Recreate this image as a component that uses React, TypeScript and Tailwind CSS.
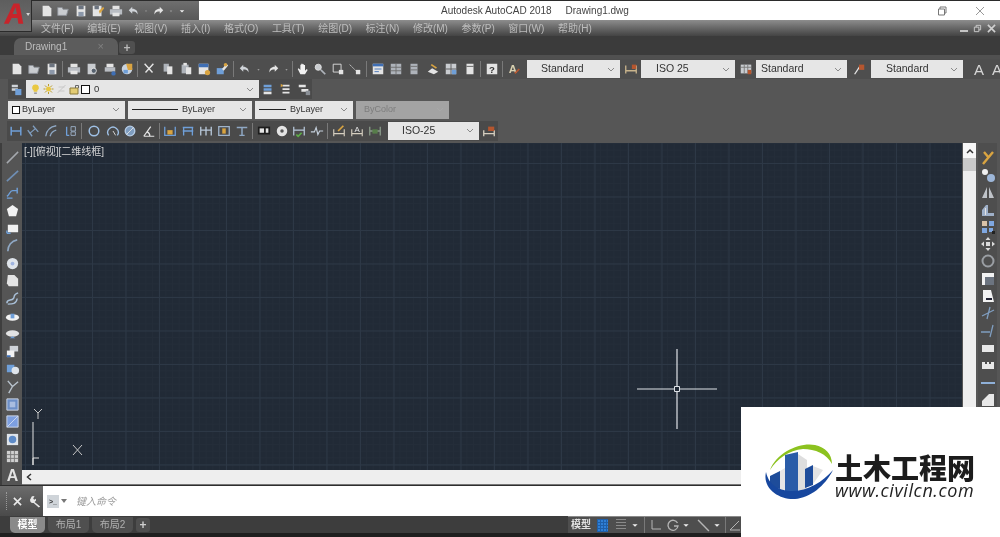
import type { ReactNode } from "react";

const cjk = "font-['Liberation_Sans','Noto_Sans_CJK_SC',sans-serif]";

const W = "#e4e4e4";
const B = "#6f9fd8";
const DB = "#3f6fb5";
const O = "#d9a441";
const R = "#b5562f";

const icons: Record<string, ReactNode> = {
  page: <path d="M3 2h7l3 3v9H3z" fill={W} />,
  open: <path d="M2 4h5l1 2h6l-2 7H2z" fill="#c9ccd0" stroke="#8a8f96" />,
  save: <g><path d="M3 2h10v12H3z" fill={W} /><path d="M5 2h6v4H5z" fill="#6c7480" /><path d="M5 9h6v5H5z" fill="#8c98aa" /></g>,
  saveas: <g><path d="M2 2h10v12H2z" fill={W} /><path d="M4 2h5v4H4z" fill="#6c7480" /><path d="M9 8l5-5 1 2-5 6z" fill={O} /></g>,
  print: <g><path d="M4 2h8v4H4z" fill={W} /><path d="M1 6h14v6H1z" fill="#b9bdc3" /><path d="M4 10h8v4H4z" fill={W} /></g>,
  preview: <g><path d="M3 2h9v12H3z" fill="#c9ccd0" /><circle cx="10" cy="10" r="3" fill="#56616e" stroke={W} /></g>,
  plot: <g><path d="M4 2h8v4H4z" fill={W} /><path d="M2 6h12v5H2z" fill="#b9bdc3" /><circle cx="12" cy="13" r="2.5" fill={DB} /></g>,
  publish: <g><circle cx="8" cy="8" r="6" fill="#c9d3de" /><path d="M7 2h7v7H9z" fill={O} /><path d="M4 9h5v4H4z" fill={B} /></g>,
  cut: <path d="M3 2l9 10M13 2L4 12" stroke={W} strokeWidth="1.6" fill="none" />,
  copy: <g><path d="M3 2h6v9H3z" fill="#aeb3ba" /><path d="M7 5h6v9H7z" fill={W} /></g>,
  paste: <g><path d="M3 3h8v10H3z" fill="#aeb3ba" /><path d="M5 1h4v3H5z" fill={W} /><path d="M8 6h6v8H8z" fill={W} /></g>,
  block: <g><path d="M2 2h11v12H2z" fill={W} /><path d="M2 2h11v4H2z" fill={DB} /><circle cx="12" cy="12" r="3" fill={O} /></g>,
  brush: <g><path d="M2 7h8v7H2z" fill={B} /><path d="M8 8l5-6 2 2-5 6z" fill={W} /><circle cx="12" cy="3" r="2" fill={O} /></g>,
  undo: <path d="M6 3L2 7l4 4V8.5c3 0 5 .5 6 3.5 .5-4-2-6.5-6-6.5z" fill="#cfd3d8" />,
  redo: <path d="M10 3l4 4-4 4V8.5c-3 0-5 .5-6 3.5-.5-4 2-6.5 6-6.5z" fill={W} />,
  caret: <path d="M6 7h4l-2 3z" fill="#9a9a9a" />,
  caretW: <path d="M5 7h6l-3 3z" fill="#f0f0f0" />,
  hand: <path d="M5 14L2 8l1-1 2 2V3h1v4V2h1.5v5V2.5H9V7V3.5h1.3V10l2-2 1 1-3 5z" fill="#f2f2f2" />,
  zoom: <g><circle cx="6" cy="6" r="3.5" fill="#c9ccd0" stroke={W} /><path d="M9 9l5 5" stroke="#aeb3ba" strokeWidth="2" /></g>,
  window: <g><path d="M2.5 2.5h9v9h-9z" fill="none" stroke={W} /><path d="M9 9h5v5H9z" fill={W} /></g>,
  prev: <g><path d="M2 3l7 7" stroke={W} strokeDasharray="2 1" /><path d="M9 9h5v5H9z" fill={W} /></g>,
  props: <g><path d="M2 2h12v12H2z" fill={W} /><path d="M2 2h12v3H2z" fill={DB} /><path d="M4 8h8M4 11h5" stroke={DB} /></g>,
  list: <g><path d="M2 2h12v12H2z" fill="#aeb3ba" /><path d="M8 2v12M2 6h12M2 10h12" stroke="#6b6b6b" /></g>,
  tall: <g><path d="M4 2h8v12H4z" fill="#aeb3ba" /><path d="M4 5h8M4 9h8" stroke="#6b6b6b" /></g>,
  sheet: <g><path d="M2 11l5-4 7 4-5 3z" fill={W} /><path d="M6 3l6 4" stroke={O} strokeWidth="2" /></g>,
  calc: <g><path d="M2 2h12v12H2z" fill="#c9ccd0" /><path d="M8 2v12M2 8h12" stroke="#555" /><path d="M9 9h5v5H9z" fill={B} /></g>,
  door: <g><path d="M4 2h8v12H4z" fill={W} /><path d="M4 5h8" stroke="#555" /></g>,
  help: <g><path d="M2 2h12v12H2z" fill={W} /><text x="8" y="12.5" fontSize="11" fontWeight="700" textAnchor="middle" fill="#333" fontFamily="Liberation Sans">?</text></g>,
  textA: <g><text x="2" y="12" fontSize="13" fontWeight="700" fill="#d8d0b0" fontFamily="Liberation Sans">A</text><path d="M9 13l5-5" stroke={R} strokeWidth="2" /></g>,
  dimStyle: <g><path d="M2 4v9M14 4v9M2 10h12" stroke="#c9b48c" strokeWidth="1.5" /><path d="M9 3h5v5H9z" fill={R} /></g>,
  tableStyle: <g><path d="M2 3h12v10H2z" fill="#c9ccd0" /><path d="M2 6h12M6 3v10M10 3v10" stroke="#777" /><path d="M10 9h4v5h-4z" fill={R} /></g>,
  leader: <g><path d="M3 14L9 5" stroke={W} strokeWidth="1.5" /><path d="M8 3h6v6H8z" fill={R} /></g>,
  bigA: <text x="8" y="14" fontSize="15" textAnchor="middle" fontWeight="700" fill="#e2e2e2" fontFamily="Liberation Sans">A</text>,
  layer: <g><path d="M2 3h7v3H2zM2 7h7v3H2z" fill="#cfd3d8" /><path d="M6 8h7v7H6z" fill={B} /></g>,
  layerA: <g><path d="M3 3h9v3H3zM3 7h9v3H3z" fill={B} /><path d="M3 11h9v3H3z" fill={W} /></g>,
  layerB: <g><path d="M4 3h8v2H4zM4 7h8v2H4zM4 11h8v2H4z" fill={W} /><path d="M2 2l3 2-3 2z" fill={O} /></g>,
  layerC: <g><path d="M2 3h8v3H2zM5 8h8v3H5z" fill={W} /><path d="M10 10h5v5h-5z" fill="#8a8f96" /></g>,
  dimLinear: <path d="M2.5 3v10M13.5 3v10M3 8h10" stroke={B} strokeWidth="1.7" fill="none" />,
  dimAligned: <path d="M2 7l5 7M8 2l6 7M4 11l7-6" stroke="#7f9dbf" strokeWidth="1.5" fill="none" />,
  dimArc: <path d="M2 14C3 7 7 3 14 2M7 14C8 10 10 8 14 7" stroke="#8fa8c4" strokeWidth="1.5" fill="none" />,
  dimOrd: <g><path d="M3 3v10M3 13h3" stroke={B} strokeWidth="1.5" /><path d="M8 3h5v5H8zM8 9h5v4H8z" fill="none" stroke="#9fb4cb" /></g>,
  circle: <circle cx="8" cy="8" r="5.5" fill="none" stroke="#9fc1e6" strokeWidth="1.7" />,
  jog: <g><path d="M3 13A6 6 0 1 1 13 13" fill="none" stroke="#9fc1e6" strokeWidth="1.5" /><path d="M8 8l3 5" stroke={W} /></g>,
  dia: <g><circle cx="8" cy="8" r="5.5" fill="#7f9dbf" stroke="#b7cde6" strokeWidth="1.5" /><path d="M4 12l8-8" stroke={W} /></g>,
  angle: <path d="M2 14h12M2 14L10 3M9 14c0-2-1-4-3-5" stroke={W} strokeWidth="1.4" fill="none" />,
  quick: <g><path d="M2 3v10h12V3" stroke={B} strokeWidth="1.5" fill="none" /><path d="M5 7h6v5H5z" fill={O} /></g>,
  base: <path d="M2 4h12M2 8h12M3 4v9M13 4v9" stroke={B} strokeWidth="1.5" fill="none" />,
  cont: <path d="M2 3v10M8 3v10M14 3v10M2 7h12" stroke="#b8c8da" strokeWidth="1.5" fill="none" />,
  space: <g><path d="M2 3h12v10H2z" fill="none" stroke="#9fb4cb" strokeWidth="1.5" /><path d="M6 5h4v6H6z" fill={O} /></g>,
  brk: <path d="M2 4h12M8 4v9M5 13h6" stroke="#8fa8c4" strokeWidth="1.7" fill="none" />,
  tol: <g><path d="M1 3h14v9H1z" fill="#1d1d1d" /><path d="M3 5h5v5H3z" fill={W} /><path d="M10 5h3v5h-3z" fill={W} /></g>,
  target: <g><circle cx="8" cy="8" r="6" fill={W} /><circle cx="8" cy="8" r="2" fill="#555" /></g>,
  inspect: <g><path d="M2 3v10M14 3v10M2 7h12" stroke="#b8c8da" strokeWidth="1.4" fill="none" /><path d="M5 12l2 2 4-4" stroke="#5dad47" strokeWidth="2" fill="none" /></g>,
  jogline: <path d="M1 9h4l2-5 2 8 2-4h4" stroke="#c4cfdb" strokeWidth="1.3" fill="none" />,
  edit: <g><path d="M2 6v8M14 6v8M2 11h12" stroke="#d6cfc0" strokeWidth="1.3" /><path d="M7 8l6-6" stroke={O} strokeWidth="2" /></g>,
  editA: <g><path d="M2 6v8M14 6v8M2 11h12" stroke="#d6cfc0" strokeWidth="1.3" /><text x="8" y="9" fontSize="9" textAnchor="middle" fill={W} fontFamily="Liberation Sans">A</text></g>,
  update: <g><path d="M2 3v10M14 3v10M2 8h12" stroke="#8a9a8a" strokeWidth="1.5" /><path d="M5 6h6v5H5z" fill="#577d4a" /></g>,
  dimNow: <g><path d="M2 7v7M14 7v7M2 11h12" stroke="#d6cfc0" strokeWidth="1.5" /><path d="M7 3h7v5H7z" fill={R} /></g>,
  line: <path d="M2 14L14 2" stroke="#a5a9ae" strokeWidth="1.6" />,
  xline: <path d="M2 14L14 3" stroke="#6f8fb5" strokeWidth="1.8" />,
  poly: <path d="M2 12c3-1 3-6 6-6h5M13 3v6M2 14h6" stroke={B} strokeWidth="1.5" fill="none" />,
  pent: <path d="M8 2l6 4.5-2.2 7.5H4.2L2 6.5z" fill="#f2f2f2" />,
  rect: <g><path d="M3 4h11v8H3z" fill="#f2f2f2" /><path d="M2 13v-3M2 13h4" stroke={B} strokeWidth="1.5" /></g>,
  arc: <path d="M3 14C3 8 7 3 13 2" stroke="#8fa8c4" strokeWidth="1.8" fill="none" />,
  disc: <g><circle cx="8" cy="8" r="6" fill="#dfe4ea" /><circle cx="8" cy="8" r="2" fill="#9fb4e0" /></g>,
  cloud: <path d="M3 2h7l4 4v8H4l-2-3z" fill="#e3e3e3" />,
  spline: <path d="M2 13c0-5 5-2 7-5s-1-4 5-6M3 14c5 0 9 0 10-6" stroke="#a9c0d8" strokeWidth="1.5" fill="none" />,
  ell: <g><ellipse cx="8" cy="9" rx="7" ry="3.5" fill="#f2f2f2" /><path d="M6 5h4v5H6z" fill={B} /></g>,
  ellArc: <g><ellipse cx="8" cy="8" rx="7" ry="3.5" fill="#e3e3e3" /><path d="M5 13l3-2 3 2z" fill={B} /></g>,
  insert: <g><path d="M5 2h9v6H5z" fill="#cfd3d8" /><path d="M2 7h8v7H2z" fill="#f2f2f2" /><path d="M2 12h4v2H2z" fill={DB} /></g>,
  make: <g><path d="M2 4h8v8H2z" fill={B} /><circle cx="11" cy="10" r="4" fill="#dfe4ea" /></g>,
  point: <path d="M3 2l5 6 6-5M8 8l-4 7" stroke="#b9c3cd" strokeWidth="1.5" fill="none" />,
  hatch: <g><path d="M2 2h12v12H2z" fill="#6d8fc7" stroke="#cfd8e6" /><path d="M5 5h6v6H5z" fill="#a9bde0" /></g>,
  gradient: <g><path d="M2 2h12v12H2z" fill="#7d9fe0" stroke="#cfd8e6" /><path d="M2 14L14 2" stroke="#cdd9f0" /></g>,
  region: <g><path d="M2 2h12v12H2z" fill="#dfe4ea" /><circle cx="8" cy="8" r="4" fill="#5e8bc7" /></g>,
  table: <g><path d="M2 2h12v12H2z" fill="#d0d0d0" /><path d="M2 6h12M2 10h12M6 2v12M10 2v12" stroke="#777" /></g>,
  erase: <path d="M3 14L13 2M4 2l5 6" stroke={O} strokeWidth="2.4" />,
  copyObj: <g><circle cx="5" cy="5" r="3" fill="#f0f0f0" /><circle cx="11" cy="11" r="4" fill="#9db6d8" /></g>,
  mirror: <path d="M7 3v11H2zM9 3v11h5z" fill="#bfc3c8" />,
  offset: <g><path d="M2 14V8l4-5 2 0v8h6v3z" fill="#9fb0c8" /><path d="M5 13V6h1v7z" fill={W} /></g>,
  array: <g><path d="M2 2h5v5H2z" fill="#d9c2a8" /><path d="M9 2h5v5H9zM2 9h5v5H2z" fill="#7fa7e0" /><path d="M9 9h4v4H9z" fill="#7fa7e0" /><path d="M12 12h3v3h-3z" fill="#222" /></g>,
  move: <path d="M8 1l2.5 3h-5zM8 15l2.5-3h-5zM1 8l3-2.5v5zM15 8l-3-2.5v5zM6 6h4v4H6z" fill="#dadada" />,
  rotate: <circle cx="8" cy="8" r="5.5" fill="none" stroke="#9a9ea3" strokeWidth="2" />,
  scale: <g><path d="M2 2h12v12H2z" fill="#f2f2f2" /><path d="M5 6h9v8H5z" fill="#6c7480" /></g>,
  stretch: <g><path d="M3 2h8l3 12H3z" fill="#f2f2f2" /><path d="M6 11h6" stroke="#223" strokeWidth="2" /></g>,
  trim: <path d="M2 11l12-6M10 2L7 14" stroke="#7f9dbf" strokeWidth="1.3" />,
  extend: <path d="M1 9h9M13 2l-3 12" stroke="#7f9dbf" strokeWidth="1.3" />,
  brkPt: <path d="M2 5h12v7H2z" fill="#e8e8e8" />,
  brkGap: <path d="M2 5h3v2h2V5h2v2h2V5h3v7H2z" fill="#e8e8e8" />,
  join: <path d="M1 8h14" stroke="#8fb0d8" strokeWidth="2" />,
  chamfer: <path d="M2 14V9l7-7h5v12z" fill="#e8e8e8" />,
};

const Icon = ({ name, size = 16 }: { name: string; size?: number }) => (
  <svg viewBox="0 0 16 16" width={size} height={size} className="shrink-0">
    {icons[name]}
  </svg>
);

const Tool = ({ name, w = 18 }: { name: string; w?: number }) => (
  <div className="flex h-full shrink-0 items-center justify-center" style={{ width: w }}>
    <Icon name={name} size={Math.min(w, 14)} />
  </div>
);

const Sep = () => <div className="mx-[1px] h-[16px] w-px shrink-0 bg-[#797979]" />;

const Chevron = ({ muted }: { muted?: boolean }) => (
  <svg viewBox="0 0 8 5" width="8" height="5" className="shrink-0">
    <path d="M1 1l3 3 3-3" fill="none" stroke={muted ? "#a8a8a8" : "#8a8a8a"} strokeWidth="1" />
  </svg>
);

const Combo = ({
  width,
  children,
  className = "bg-[#e6e6e6] text-[#333]",
  muted,
}: {
  width: number;
  children: ReactNode;
  className?: string;
  muted?: boolean;
}) => (
  <div
    className={`flex h-[18px] shrink-0 items-center justify-between pl-1 pr-[5px] text-[10px] ${className}`}
    style={{ width }}
  >
    <div className="flex min-w-0 flex-1 items-center">{children}</div>
    <Chevron muted={muted} />
  </div>
);

const menus = ["文件(F)", "编辑(E)", "视图(V)", "插入(I)", "格式(O)", "工具(T)", "绘图(D)", "标注(N)", "修改(M)", "参数(P)", "窗口(W)", "帮助(H)"];
const leftTools = ["line", "xline", "poly", "pent", "rect", "arc", "disc", "cloud", "spline", "ell", "ellArc", "insert", "make", "point", "hatch", "gradient", "region", "table", "bigA"];
const rightTools = ["erase", "copyObj", "mirror", "offset", "array", "move", "rotate", "scale", "stretch", "trim", "extend", "brkPt", "brkGap", "join", "chamfer", "chamfer"];

const LineSample = ({ w }: { w: number }) => <div className="mr-1 h-px shrink-0 bg-[#222]" style={{ width: w }} />;

const App = () => {
  return (
    <div className={`relative flex h-[537px] w-[1000px] flex-col overflow-hidden bg-[#565656] blur-[0.6px] ${cjk}`}>
      {/* title bar */}
      <div className="flex h-[20px] shrink-0 border-t border-[#2b2b2b]">
        <div className="flex w-[199px] shrink-0 items-center bg-gradient-to-b from-[#6f6f6f] to-[#585858] pl-[39px]">
          <Tool name="page" w={15} />
          <Tool name="open" w={18} />
          <Tool name="save" w={17} />
          <Tool name="saveas" w={17} />
          <Tool name="print" w={20} />
          <Tool name="undo" w={16} />
          <Tool name="caret" w={8} />
          <Tool name="redo" w={16} />
          <Tool name="caret" w={10} />
          <Tool name="caretW" w={12} />
        </div>
        <div className="relative flex flex-1 items-center bg-white">
          <span className="ml-[242px] whitespace-pre text-[10px] text-[#444]">Autodesk AutoCAD 2018     Drawing1.dwg</span>
          <svg viewBox="0 0 10 10" width="10" height="10" className="absolute left-[738px] top-[5px]">
            <path d="M1.5 3h6v6h-6zM3 3V1h6v6H7.5" fill="none" stroke="#777" />
          </svg>
          <svg viewBox="0 0 10 10" width="10" height="10" className="absolute left-[776px] top-[5px]">
            <path d="M1 1l8 8M9 1l-8 8" stroke="#999" />
          </svg>
        </div>
      </div>

      {/* menu bar */}
      <div className="flex h-[16px] shrink-0 items-center bg-gradient-to-b from-[#8d8d8d] to-[#444] pl-[41px] text-[10px] leading-none text-[#bdbdbd]">
        <div className="flex flex-1 gap-[13.5px] pt-px">
          {menus.map((m) => (
            <span key={m} className="whitespace-nowrap">
              {m}
            </span>
          ))}
        </div>
        <div className="flex items-center gap-[5px] pr-[4px] text-[#c9c9c9]">
          <div className="mt-[5px] h-[2px] w-[8px] bg-[#c4c4c4]" />
          <svg viewBox="0 0 10 10" width="9" height="9">
            <path d="M1.5 3.5h5v5h-5zM3.5 3.5v-2h5v5h-2" fill="none" stroke="#d0d0d0" />
          </svg>
          <svg viewBox="0 0 10 10" width="9" height="9">
            <path d="M1 1l8 8M9 1l-8 8" stroke="#d0d0d0" strokeWidth="1.8" />
          </svg>
        </div>
      </div>

      {/* file tabs */}
      <div className="flex h-[19px] shrink-0 items-end bg-[#3b3b3b] pl-[14px]">
        <div className="flex h-[17px] w-[104px] items-center justify-between rounded-t-[7px] bg-[#5c5c5c] px-[11px] text-[10px] text-[#bdbdbd]">
          <span>Drawing1</span>
          <span className="mr-[3px] text-[11px] leading-none text-[#808080]">×</span>
        </div>
        <div className="mb-[1px] ml-[1px] flex h-[13px] w-[16px] items-center justify-center rounded-[3px] bg-[#505050] text-[12px] font-bold leading-none text-[#b8b8b8]">
          +
        </div>
      </div>

      <div className="h-[4px] shrink-0 bg-[#505050]" />

      {/* standard toolbar */}
      <div className="flex h-[20px] shrink-0 items-center bg-[#4e4e4e] pl-[8px]">
        <Tool name="page" />
        <Tool name="open" w={16} />
        <Tool name="save" w={19} />
        <Sep />
        <Tool name="print" w={19} />
        <Tool name="preview" />
        <Tool name="plot" w={17} />
        <Tool name="publish" w={18} />
        <Sep />
        <Tool name="cut" w={20} />
        <Tool name="copy" />
        <Tool name="paste" />
        <Tool name="block" w={17} />
        <Tool name="brush" w={20} />
        <Sep />
        <Tool name="undo" w={19} />
        <Tool name="caret" w={9} />
        <Tool name="redo" w={19} />
        <Tool name="caret" w={9} />
        <Sep />
        <Tool name="hand" w={17} />
        <Tool name="zoom" />
        <Tool name="window" w={17} />
        <Tool name="prev" w={17} />
        <div className="w-[2px] shrink-0" />
        <Sep />
        <Tool name="props" w={19} />
        <Tool name="list" />
        <Tool name="tall" w={18} />
        <Tool name="sheet" w={19} />
        <Tool name="calc" w={18} />
        <Tool name="door" w={19} />
        <Sep />
        <Tool name="help" w={19} />
        <Sep />
        <Tool name="textA" w={20} />
        <div className="w-[3px] shrink-0" />
        <Combo width={93}>
          <span className="ml-[10px] text-[10.5px]">Standard</span>
        </Combo>
        <Tool name="dimStyle" w={21} />
        <Combo width={94}>
          <span className="ml-[11px] text-[10.5px]">ISO 25</span>
        </Combo>
        <Tool name="tableStyle" w={21} />
        <Combo width={91}>
          <span className="ml-[1px] text-[10.5px]">Standard</span>
        </Combo>
        <Tool name="leader" w={24} />
        <Combo width={92}>
          <span className="ml-[11px] text-[10.5px]">Standard</span>
        </Combo>
        <div className="ml-[11px] flex gap-[8px] text-[15px] leading-none text-[#d6d6d6]">
          <span>A</span>
          <span>A</span>
        </div>
      </div>

      {/* layer toolbar */}
      <div className="flex h-[20px] shrink-0 items-center pl-[8px]">
        <div className="flex h-[20px] w-[304px] items-center bg-[#4a4a4a]">
          <Tool name="layer" w={18} />
          <Combo width={233}>
            <svg viewBox="0 0 12 12" width="11" height="12" className="shrink-0">
              <path d="M6 1a3.5 3.5 0 0 1 2 6.5V9H4V7.5A3.5 3.5 0 0 1 6 1z" fill="#e9c842" />
              <path d="M4.5 10.5h3" stroke="#666" />
            </svg>
            <svg viewBox="0 0 12 12" width="13" height="12" className="ml-[1px] shrink-0">
              <circle cx="6" cy="6" r="2.5" fill="#e9c842" />
              <path d="M6 1v2M6 9v2M1 6h2M9 6h2M2.5 2.5l1.5 1.5M8 8l1.5 1.5M2.5 9.5L4 8M8 4l1.5-1.5" stroke="#b89b2c" />
            </svg>
            <svg viewBox="0 0 12 12" width="13" height="12" className="shrink-0">
              <path d="M2 10l8-8M3 4h6M3 8h6" stroke="#c8c8c8" />
            </svg>
            <svg viewBox="0 0 12 12" width="13" height="12" className="shrink-0">
              <path d="M1.5 5h8v6h-8z" fill="#e3cc74" stroke="#8a7a3a" />
              <path d="M7 5V2.5h3V5" fill="none" stroke="#666" />
            </svg>
            <div className="h-[9px] w-[9px] shrink-0 border border-[#111] bg-white" />
            <span className="ml-[4px] text-[9.5px]">0</span>
          </Combo>
          <Tool name="layerA" w={18} />
          <Tool name="layerB" w={18} />
          <Tool name="layerC" w={17} />
        </div>
      </div>

      {/* properties toolbar */}
      <div className="flex h-[21px] shrink-0 items-center gap-[3px] pl-[8px]">
        <Combo width={117}>
          <div className="mr-[2px] h-[8px] w-[8px] border border-[#111] bg-white" />
          <span className="text-[9px]">ByLayer</span>
        </Combo>
        <Combo width={124}>
          <LineSample w={46} />
          <span className="text-[9px]">ByLayer</span>
        </Combo>
        <Combo width={98}>
          <LineSample w={27} />
          <span className="text-[9px]">ByLayer</span>
        </Combo>
        <Combo width={93} className="bg-[#a3a3a3] text-[#7d7d7d]" muted>
          <span className="ml-[4px] text-[9px]">ByColor</span>
        </Combo>
      </div>

      {/* dimension toolbar */}
      <div className="flex h-[21px] shrink-0 items-center pl-[7px]">
        <div className="flex h-[20px] w-[491px] items-center bg-[#4a4a4a]">
          <Tool name="dimLinear" w={18} />
          <Tool name="dimAligned" w={16} />
          <Tool name="dimArc" w={20} />
          <Tool name="dimOrd" w={19} />
          <Sep />
          <Tool name="circle" w={21} />
          <Tool name="jog" w={17} />
          <Tool name="dia" w={18} />
          <Tool name="angle" w={19} />
          <Sep />
          <Tool name="quick" w={18} />
          <Tool name="base" w={17} />
          <Tool name="cont" w={19} />
          <Tool name="space" w={18} />
          <Tool name="brk" w={18} />
          <Sep />
          <Tool name="tol" w={19} />
          <Tool name="target" w={17} />
          <Tool name="inspect" w={18} />
          <Tool name="jogline" w={18} />
          <Sep />
          <Tool name="edit" w={19} />
          <Tool name="editA" w={18} />
          <Tool name="update" w={17} />
          <Combo width={91} className="ml-[5px] bg-[#e6e6e6] text-[#333]">
            <span className="ml-[10px] text-[10.5px]">ISO-25</span>
          </Combo>
          <Tool name="dimNow" w={20} />
        </div>
      </div>

      <div className="h-[1px] shrink-0 bg-[#565656]" />

      {/* workspace */}
      <div className="flex h-[343px] shrink-0 pt-px">
        <div className="flex w-[22px] shrink-0 flex-col items-center border-l-2 border-[#3e3e3e] bg-[#555] pt-[6px]">
          {leftTools.map((t, i) => (
            <div key={i} className="flex h-[17.6px] shrink-0 items-center justify-center">
              <Icon name={t} size={t === "bigA" ? 17 : 15} />
            </div>
          ))}
        </div>

        <div className="flex min-w-0 flex-1 flex-col">
          <div className="relative h-[327px] shrink-0 overflow-hidden bg-[#212a36] bg-[linear-gradient(#2d3846_1px,transparent_1px),linear-gradient(90deg,#2d3846_1px,transparent_1px),linear-gradient(#242d39_1px,transparent_1px),linear-gradient(90deg,#242d39_1px,transparent_1px)] bg-[size:33.5px_33.5px,33.5px_33.5px,6.7px_6.7px,6.7px_6.7px] bg-[position:0_20px,3px_0,0_20px,3px_0]">
            <span className="absolute left-[2px] top-[2px] whitespace-nowrap text-[10px] leading-[14px] text-[#d6d6d6]">
              [-][俯视][二维线框]
            </span>

            {/* UCS icon */}
            <svg viewBox="0 0 70 60" width="70" height="60" className="absolute left-[3px] top-[263px]">
              <path d="M8 16v43M8 52h6M8 59V52" stroke="#e2e2e2" fill="none" />
              <path d="M9 3l4 4 4-4M13 7v6" stroke="#c7c7c7" fill="none" />
              <path d="M48 39l9 10M57 39l-9 10" stroke="#c7c7c7" fill="none" />
            </svg>

            {/* crosshair */}
            <svg viewBox="0 0 80 80" width="80" height="80" className="absolute left-[615px] top-[206px]">
              <path d="M40 0v37M40 43v37M0 40h37M43 40h37" stroke="#dfe3e8" strokeWidth="1.2" />
              <path d="M37.5 37.5h5v5h-5z" fill="none" stroke="#dfe3e8" />
            </svg>
          </div>
          <div className="flex h-[15px] shrink-0 items-center border-b border-[#777] bg-[#eeeeee] pl-[4px]">
            <svg viewBox="0 0 6 8" width="6" height="8">
              <path d="M5 1L1.5 4 5 7" fill="none" stroke="#333" strokeWidth="1.5" />
            </svg>
          </div>
        </div>

        <div className="flex w-[38px] shrink-0 items-start justify-between">
          <div className="ml-px flex h-[327px] w-[13px] flex-col bg-[#eeeeee]">
            <div className="flex h-[15px] items-center justify-center bg-[#f7f7f7]">
              <svg viewBox="0 0 8 6" width="8" height="6">
                <path d="M1 5l3-3 3 3" fill="none" stroke="#333" strokeWidth="1.5" />
              </svg>
            </div>
            <div className="h-[13px] bg-[#c9c9c9]" />
          </div>
          <div className="mr-[3px] flex w-[19px] flex-col items-center bg-[#4e4e4e] pt-[6px]">
            {rightTools.map((t, i) => (
              <div key={i} className="flex h-[17.3px] shrink-0 items-center justify-center">
                <Icon name={t} size={16} />
              </div>
            ))}
          </div>
        </div>
      </div>

      {/* command line */}
      <div className="flex h-[31px] shrink-0 border-t border-[#2e2e2e]">
        <div className="flex w-[43px] shrink-0 items-center bg-gradient-to-b from-[#6c6c6c] to-[#4a4a4a] pl-[6px]">
          <div className="h-[18px] border-l border-dotted border-[#9a9a9a]" />
          <svg viewBox="0 0 10 10" width="9" height="9" className="ml-[6px]">
            <path d="M1 1l8 8M9 1l-8 8" stroke="#eaeaea" strokeWidth="1.8" />
          </svg>
          <svg viewBox="0 0 14 14" width="13" height="13" className="ml-[7px]">
            <path d="M2 3.5a3 3 0 0 1 4-2L4.5 3.5l1 1.5 2-1a3 3 0 0 1-1.5 3.5L12 12.5 10.5 13.5 5 8.5A3 3 0 0 1 2 3.5z" fill="#e8e8e8" />
          </svg>
        </div>
        <div className="flex flex-1 items-center bg-white pl-[4px]">
          <div className="flex h-[13px] w-[12px] items-center justify-center bg-[#cfd4d9] text-[7px] font-bold leading-none text-[#333]">
            &gt;_
          </div>
          <svg viewBox="0 0 6 4" width="6" height="4" className="ml-[2px]">
            <path d="M0 0h6L3 4z" fill="#777" />
          </svg>
          <span className="ml-[9px] text-[10px] italic text-[#9c9c9c]">键入命令</span>
        </div>
      </div>

      {/* layout tabs + status bar */}
      <div className="flex h-[17px] shrink-0 items-center bg-[#3d3d3d] pl-[10px] text-[10px] leading-none">
        <div className="flex h-[16px] w-[35px] items-center justify-center rounded-b-[5px] bg-[#8a8a8a] font-bold text-white">模型</div>
        <div className="ml-[3px] flex h-[16px] w-[41px] items-center justify-center rounded-b-[5px] bg-[#4f4f4f] text-[#b0b0b0]">布局1</div>
        <div className="ml-[3px] flex h-[16px] w-[41px] items-center justify-center rounded-b-[5px] bg-[#4f4f4f] text-[#b0b0b0]">布局2</div>
        <div className="ml-[3px] flex h-[14px] w-[14px] items-center justify-center rounded-[3px] bg-[#4f4f4f] text-[12px] font-bold text-[#cfcfcf]">+</div>
        <div className="ml-[418px] flex h-[17px] w-[240px] items-center border-t border-[#8a8a8a] bg-[#4e4e4e] pl-[3px]">
          <span className="font-bold text-[#e2e2e2]">模型</span>
          <div className="ml-[6px] h-[13px] w-[11px] bg-[#2f7fd6] bg-[linear-gradient(#1f5fa8_1px,transparent_1px),linear-gradient(90deg,#1f5fa8_1px,transparent_1px)] bg-[size:3px_3px]" />
          <div className="ml-[8px] h-[12px] w-[10px] bg-[linear-gradient(#8a8a8a_1px,transparent_1px)] bg-[size:3px_3px]" />
          <Tool name="caretW" w={17} />
          <Sep />
          <svg viewBox="0 0 12 12" width="12" height="12" className="ml-[4px]">
            <path d="M2 1v9h9" stroke="#b5b5b5" fill="none" />
          </svg>
          <svg viewBox="0 0 12 12" width="12" height="12" className="ml-[5px]">
            <path d="M10.5 4A5 5 0 1 0 11 7H7" stroke="#b5b5b5" strokeWidth="1.3" fill="none" />
          </svg>
          <Tool name="caretW" w={14} />
          <svg viewBox="0 0 12 12" width="13" height="13" className="ml-[4px]">
            <path d="M1 1l10 10" stroke="#b5b5b5" strokeWidth="1.3" />
          </svg>
          <Tool name="caretW" w={14} />
          <Sep />
          <svg viewBox="0 0 12 12" width="12" height="12" className="ml-[2px]">
            <path d="M1 11L10 2M1 11h10" stroke="#b5b5b5" />
          </svg>
        </div>
      </div>
      <div className="flex-1 bg-[#1f1f1f]" />

      {/* application button */}
      <div className="absolute left-0 top-0 flex h-[32px] w-[32px] items-center justify-center border-b border-r border-[#2b2b2b] bg-gradient-to-b from-[#5e5e5e] to-[#6e6e6e]">
        <svg viewBox="0 0 32 32" width="32" height="32">
          <path d="M4 24L14 3h6l4 21h-5l-1-6h-6l-3 6zM13 14h4.5L16 7z" fill="#c8242b" fillRule="evenodd" />
          <path d="M27 13h4l-2 3z" fill="#d4d4d4" />
        </svg>
      </div>

      {/* watermark */}
      <div className="absolute bottom-0 right-0 flex h-[130px] w-[259px] items-start bg-white pl-[24px] pt-[37px]">
        <svg viewBox="0 0 70 56" width="70" height="56" className="shrink-0">
          <path d="M5 26C12 8 35-2 50 1c10 2 17 9 17 19C62 10 50 5 38 5 24 6 12 15 5 26z" fill="#8cc21f" />
          <path d="M33 10l9 6v30h-9z" fill="#dedede" />
          <path d="M15 27l5-3v22h-5z" fill="#e6e6e6" />
          <path d="M48 22l10 4-10 14z" fill="#e3e3e3" />
          <path d="M20 11l13-3v40H20z" fill="#2a5ca8" />
          <path d="M5 32l10-5v18l-10-2z" fill="#1e4c9a" />
          <path d="M40 25l8-4v20l-8 3z" fill="#1e4c9a" />
          <path d="M1 28c-4 17 14 28 29 27 15-1 30-13 38-29-10 12-26 21-40 21C15 47 4 42 1 28z" fill="#17479e" />
        </svg>
        <div className="flex flex-col pt-[8px]">
          <span className="whitespace-nowrap font-['Noto_Sans_CJK_SC',sans-serif] text-[28px] font-black leading-[30px] text-[#1c1c1c]">
            土木工程网
          </span>
          <span className="whitespace-nowrap font-['Open_Sans',sans-serif] text-[18px] font-medium italic leading-[16px] tracking-[0.6px] text-[#222]">
            www.civilcn.com
          </span>
        </div>
      </div>
    </div>
  );
};

export default App;
